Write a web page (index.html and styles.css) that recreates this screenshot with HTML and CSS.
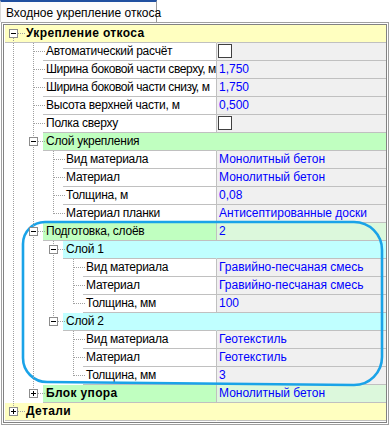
FILE: index.html
```html
<!DOCTYPE html>
<html>
<head>
<meta charset="utf-8">
<link rel="stylesheet" href="styles.css">
</head>
<body>
<div class="window">
  <div class="tabs"><div class="tab">Входное укрепление откоса</div></div>
  <div class="panel">
    <div class="inner">
      <div class="row cat full"><div class="name"><span class="s s0 first"><i class="bx minus"></i></span><span class="label">Укрепление откоса</span></div><div class="val"></div></div>
      <div class="row"><div class="name"><span class="s s0 pipe"></span><span class="s tee"></span><span class="label">Автоматический расчёт</span></div><div class="val"><span class="chk"></span></div></div>
      <div class="row"><div class="name"><span class="s s0 pipe"></span><span class="s tee"></span><span class="label tight">Ширина боковой части сверху, м</span></div><div class="val">1,750</div></div>
      <div class="row"><div class="name"><span class="s s0 pipe"></span><span class="s tee"></span><span class="label tight">Ширина боковой части снизу, м</span></div><div class="val">1,750</div></div>
      <div class="row"><div class="name"><span class="s s0 pipe"></span><span class="s tee"></span><span class="label">Высота верхней части, м</span></div><div class="val">0,500</div></div>
      <div class="row"><div class="name"><span class="s s0 pipe"></span><span class="s tee"></span><span class="label">Полка сверху</span></div><div class="val"><span class="chk"></span></div></div>
      <div class="row grp full"><div class="name"><span class="s s0 pipe"></span><span class="s tee"><i class="bx minus"></i></span><span class="label">Слой укрепления</span></div><div class="val"></div></div>
      <div class="row"><div class="name"><span class="s s0 pipe"></span><span class="s pipe"></span><span class="s tee"></span><span class="label">Вид материала</span></div><div class="val">Монолитный бетон</div></div>
      <div class="row"><div class="name"><span class="s s0 pipe"></span><span class="s pipe"></span><span class="s tee"></span><span class="label">Материал</span></div><div class="val">Монолитный бетон</div></div>
      <div class="row"><div class="name"><span class="s s0 pipe"></span><span class="s pipe"></span><span class="s tee"></span><span class="label">Толщина, м</span></div><div class="val">0,08</div></div>
      <div class="row"><div class="name"><span class="s s0 pipe"></span><span class="s pipe"></span><span class="s elbow"></span><span class="label">Материал планки</span></div><div class="val">Антисептированные доски</div></div>
      <div class="row grp"><div class="name"><span class="s s0 pipe"></span><span class="s tee"><i class="bx minus"></i></span><span class="label">Подготовка, слоёв</span></div><div class="val">2</div></div>
      <div class="row sub full"><div class="name"><span class="s s0 pipe"></span><span class="s pipe"></span><span class="s tee"><i class="bx minus"></i></span><span class="label">Слой 1</span></div><div class="val"></div></div>
      <div class="row"><div class="name"><span class="s s0 pipe"></span><span class="s pipe"></span><span class="s pipe"></span><span class="s tee"></span><span class="label">Вид материала</span></div><div class="val">Гравийно-песчаная смесь</div></div>
      <div class="row"><div class="name"><span class="s s0 pipe"></span><span class="s pipe"></span><span class="s pipe"></span><span class="s tee"></span><span class="label">Материал</span></div><div class="val">Гравийно-песчаная смесь</div></div>
      <div class="row"><div class="name"><span class="s s0 pipe"></span><span class="s pipe"></span><span class="s pipe"></span><span class="s elbow"></span><span class="label">Толщина, мм</span></div><div class="val">100</div></div>
      <div class="row sub full"><div class="name"><span class="s s0 pipe"></span><span class="s pipe"></span><span class="s elbow"><i class="bx minus"></i></span><span class="label">Слой 2</span></div><div class="val"></div></div>
      <div class="row"><div class="name"><span class="s s0 pipe"></span><span class="s pipe"></span><span class="s"></span><span class="s tee"></span><span class="label">Вид материала</span></div><div class="val">Геотекстиль</div></div>
      <div class="row"><div class="name"><span class="s s0 pipe"></span><span class="s pipe"></span><span class="s"></span><span class="s tee"></span><span class="label">Материал</span></div><div class="val">Геотекстиль</div></div>
      <div class="row"><div class="name"><span class="s s0 pipe"></span><span class="s pipe"></span><span class="s"></span><span class="s elbow"></span><span class="label">Толщина, мм</span></div><div class="val">3</div></div>
      <div class="row grp"><div class="name"><span class="s s0 pipe"></span><span class="s elbow"><i class="bx plus"></i></span><span class="label b">Блок упора</span></div><div class="val">Монолитный бетон</div></div>
      <div class="row cat full"><div class="name"><span class="s s0 elbow"><i class="bx plus"></i></span><span class="label">Детали</span></div><div class="val"></div></div>
    </div>
  </div>
  <svg class="mark" width="390" height="425" viewBox="0 0 390 425">
    <path d="M23,244 A22,22 0 0 1 45,222 L354,222 A28,28 0 0 1 382,250 L382,357 A28,28 0 0 1 354,385 L47,382 A24,24 0 0 1 23,358 Z" fill="none" stroke="#1aa3e8" stroke-width="2.6"/>
  </svg>
</div>
</body>
</html>
```

FILE: styles.css
```css
html, body {
  margin: 0;
  padding: 0;
  background: #fff;
}
body {
  font-family: "Liberation Sans", Arial, sans-serif;
  font-size: 12px;
  color: #000;
}
.window {
  position: relative;
  width: 390px;
  height: 425px;
  overflow: hidden;
}
.tabs {
  height: 22px;
  display: flex;
}
.tab {
  width: 157px;
  height: 22px;
  box-sizing: border-box;
  border-top: 2px solid #2050a0;
  border-left: 1px solid #d8d8d8;
  border-right: 1px solid #9a9a9a;
  background: #fcfcfc;
  padding-left: 5px;
  padding-top: 3px;
  line-height: 16px;
  white-space: nowrap;
}
.panel {
  margin-left: 1px;
  width: 388px;
  height: 403px;
  box-sizing: border-box;
  border: 1px solid #a0a0a0;
  padding: 1px;
  background: #fff;
}
.inner {
  height: 100%;
  box-sizing: border-box;
  border: 1px solid #828282;
  padding-left: 1px;
}
.row {
  display: flex;
  height: 18px;
}
.name {
  width: 211px;
  flex: none;
  display: flex;
}
.label {
  flex: 1;
  min-width: 0;
  padding-left: 3px;
  border-bottom: 1px solid #c0c0c0;
  line-height: 17px;
  letter-spacing: -0.25px;
  white-space: nowrap;
  overflow: hidden;
  background: #fff;
}
.label.tight {
  letter-spacing: -0.4px;
}
.val {
  width: 170px;
  flex: none;
  box-sizing: border-box;
  border-left: 1px solid #c0c0c0;
  border-bottom: 1px solid #c0c0c0;
  background: #f0f0f0;
  color: #0000ff;
  padding-left: 2px;
  line-height: 17px;
  white-space: nowrap;
  overflow: hidden;
}
.full .val {
  border-left-color: transparent;
}
.cat .name {
  background: #ffffc0;
  border-bottom: 1px solid #c0c0c0;
}
.cat .label {
  background: #ffffc0;
  border-bottom: 0;
  font-weight: bold;
  letter-spacing: 0.35px;
}
.cat .val {
  background: #ffffc0;
}
.cat .s0 {
  height: 17px;
}
.grp .label {
  background: #c0ffc0;
}
.grp .val {
  background: #dcf8dc;
}
.grp.full .val {
  background: #c0ffc0;
}
.sub .label,
.sub .val {
  background: #c0ffff;
}
.b {
  font-weight: bold;
  letter-spacing: 0.35px;
}

/* tree guides */
.s {
  flex: none;
  width: 20px;
  height: 18px;
  position: relative;
  z-index: 1;
}
.s0 {
  width: 18px;
}
.pipe::before,
.tee::before,
.elbow::before,
.first::before {
  content: "";
  position: absolute;
  left: calc(100% - 10px);
  width: 1px;
  top: 0;
  bottom: 0;
  background: repeating-linear-gradient(to bottom, #a0a0a0 0 1px, transparent 1px 2px);
}
.elbow::before {
  bottom: auto;
  height: 9px;
}
.first::before {
  top: 9px;
}
.tee::after,
.elbow::after,
.first::after {
  content: "";
  position: absolute;
  left: calc(100% - 9px);
  right: -3px;
  top: 8px;
  height: 1px;
  background: repeating-linear-gradient(to right, #a0a0a0 0 1px, transparent 1px 2px);
}
.bx {
  position: absolute;
  left: calc(100% - 14px);
  top: 4px;
  width: 9px;
  height: 9px;
  box-sizing: border-box;
  border: 1px solid #8c8c8c;
  background: #fff;
  z-index: 2;
}
.bx::before {
  content: "";
  position: absolute;
  left: 1px;
  top: 3px;
  width: 5px;
  height: 1px;
  background: #000;
}
.plus::after {
  content: "";
  position: absolute;
  left: 3px;
  top: 1px;
  width: 1px;
  height: 5px;
  background: #000;
}
.chk {
  display: block;
  width: 14px;
  height: 14px;
  box-sizing: border-box;
  margin-top: 1px;
  margin-left: -1px;
  border: 1px solid #404040;
  background: #fff;
}
.mark {
  position: absolute;
  left: 0;
  top: 0;
  pointer-events: none;
}
```
